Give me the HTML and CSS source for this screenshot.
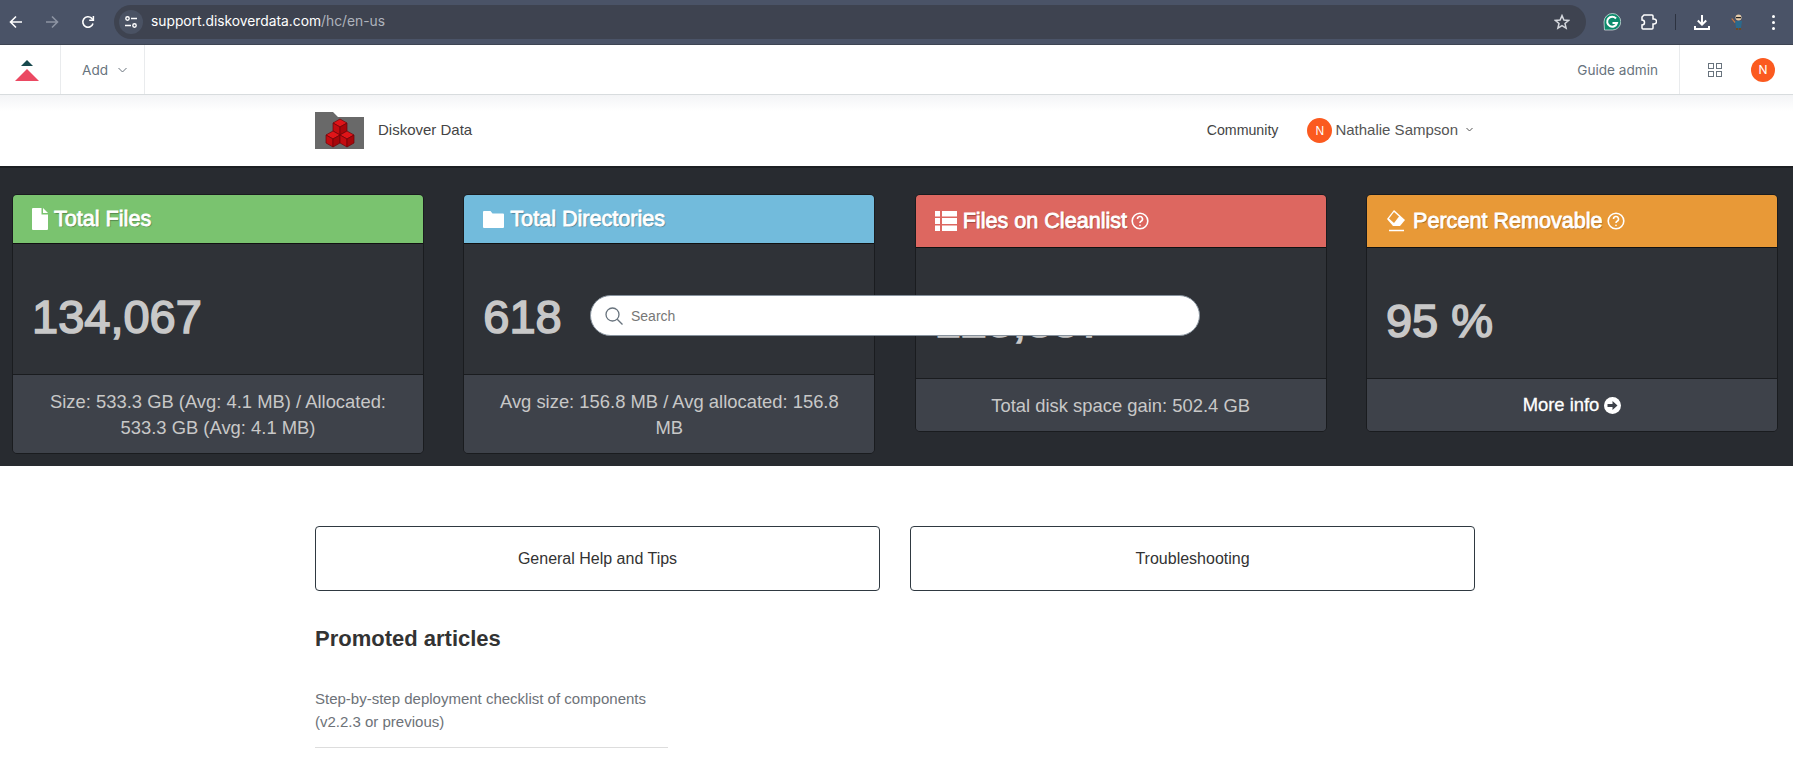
FILE: index.html
```html
<!DOCTYPE html>
<html lang="en">
<head>
  <meta charset="UTF-8" />
  <meta name="viewport" content="width=device-width, initial-scale=1.0"/>
  <title>Diskover Data</title>
  <link rel="stylesheet" href="styles.css">
</head>
<body>
  <!-- Browser toolbar -->
  <div class="browser-bar">
    <span class="nav-btn">
      <svg width="14" height="14" viewBox="0 0 14 14" fill="none" stroke="#fff" stroke-width="1.6"><path d="M13 7H2M7 1.5 1.5 7 7 12.5"/></svg>
    </span>
    <span class="nav-btn">
      <svg width="14" height="14" viewBox="0 0 14 14" fill="none" stroke="#8d94a3" stroke-width="1.6"><path d="M1 7h11M7 1.5 12.5 7 7 12.5"/></svg>
    </span>
    <span class="nav-btn">
      <svg width="14" height="14" viewBox="0 0 14 14" fill="none" stroke="#fff" stroke-width="1.6"><path d="M12 8.500A5.200 5.200 0 1 1 10.600 3.200L12 4.800"/><path d="M12.400 1v4.200H8.200" stroke-width="1.500"/></svg>
    </span>
    <div class="url-pill">
      <span class="site-info">
        <svg width="14" height="14" viewBox="0 0 14 14" fill="none" stroke="#fff" stroke-width="1.4"><circle cx="3.500" cy="3.500" r="1.700"/><path d="M7 3.500h6M1 10.500h6"/><circle cx="10.500" cy="10.500" r="1.700"/></svg>
      </span>
      <span class="url"><span class="url-host">support.diskoverdata.com</span>/hc/en-us</span>
      <svg class="star" width="16" height="16" viewBox="0 0 16 16" fill="none" stroke="#d5d8de" stroke-width="1.500"><path d="M8 1.600 9.900 6l4.700.4-3.600 3.100 1.100 4.600L8 11.700l-4.100 2.400L5 9.500 1.400 6.400 6.100 6z"/></svg>
    </div>
    <svg class="tool-grammarly" width="18" height="18" viewBox="0 0 18 18"><path d="M9.500 .5a8.200 8.200 0 0 1 0 16.500H1.500L1 9a8.500 8.500 0 0 1 8.500-8.500z" fill="#0d8a6c" stroke="#fff" stroke-width=".6"/><path d="M13 5.500A5 5 0 1 0 14 10H9.500" fill="none" stroke="#fff" stroke-width="2"/></svg>
    <svg class="tool-ext" width="16" height="16" viewBox="0 0 16 16" fill="none" stroke="#fff" stroke-width="1.500"><path d="M3 1h8a1 1 0 0 1 1 1v3h1a2.500 2.500 0 0 1 0 5h-1v4a1 1 0 0 1-1 1H2a1 1 0 0 1-1-1v-3a2.500 2.500 0 0 0 0-5V3z"/></svg>
    <span class="tool-sep"></span>
    <svg class="tool-down" width="16" height="16" viewBox="0 0 16 16" fill="none" stroke="#fff" stroke-width="2"><path d="M8 1v9M3.800 6.500 8 10.700l4.200-4.200M1 12v3h14v-3"/></svg>
    <svg class="tool-me" width="14" height="16" viewBox="0 0 14 16"><circle cx="7.500" cy="3.500" r="3" fill="#e3c9a8"/><rect x="5" y="3" width="5" height="1.200" fill="#222"/><path d="M4 7h7l-1 7H5z" fill="#2b6a8d"/><path d="M1 4l3.500 4-.8 1L.4 5z" fill="#c9773f"/><path d="M5 14h2v2H5zM8 14h2v2H8z" fill="#6d4a22"/></svg>
    <span class="tool-dots"><i></i><i></i><i></i></span>
  </div>

  <!-- Zendesk admin strip -->
  <div class="admin-bar">
    <div class="admin-logo">
      <svg width="26" height="22" viewBox="0 0 26 22"><path d="M7 7 13 1l6 6z" fill="#17494d"/><path d="M1 22 13 10l12 12z" fill="#eb4962"/></svg>
    </div>
    <div class="admin-add">
      Add
      <svg width="9" height="6" viewBox="0 0 9 6" fill="none" stroke="#68737d"><path d="M.5 1 4.500 5l4-4"/></svg>
    </div>
    <div class="admin-right">
      <span class="guide-link">Guide admin</span>
      <div class="admin-apps">
        <svg width="14" height="14" viewBox="0 0 14 14" fill="none" stroke="#68737d"><rect x=".5" y=".5" width="5" height="5"/><rect x="8.500" y=".5" width="5" height="5"/><rect x=".5" y="8.500" width="5" height="5"/><rect x="8.500" y="8.500" width="5" height="5"/></svg>
        <span class="avatar avatar-sm">N</span>
      </div>
    </div>
  </div>

  <!-- Help center header -->
  <header class="hc-header">
    <div class="wrap hc-header-row">
      <svg class="hc-logo" width="49" height="37" viewBox="0 0 49 37">
        <path d="M0 0h18l5 5h26v32H0z" fill="#696969"/>
        <g stroke="#6e0408" stroke-width=".7" stroke-linejoin="round">
          <path d="M25 7l7 4-7 4-7-4z" fill="#e01418"/><path d="M18 11l7 4v8l-7-4z" fill="#c40c10"/><path d="M32 11l-7 4v8l7-4z" fill="#a8060a"/>
          <path d="M18 19l7 4-7 4-7-4z" fill="#e01418"/><path d="M11 23l7 4v8l-7-4z" fill="#c40c10"/><path d="M25 23l-7 4v8l7-4z" fill="#a8060a"/>
          <path d="M32 19l7 4-7 4-7-4z" fill="#e01418"/><path d="M25 23l7 4v8l-7-4z" fill="#c40c10"/><path d="M39 23l-7 4v8l7-4z" fill="#a8060a"/>
        </g>
      </svg>
      <span class="hc-name">Diskover Data</span>
      <nav class="hc-nav">
        <span class="hc-community">Community</span>
        <span class="avatar avatar-md">N</span>
        <span class="hc-user">Nathalie Sampson</span>
        <svg width="7" height="5" viewBox="0 0 7 5" fill="none" stroke="#555"><path d="M.5 1 3.500 4l3-3"/></svg>
      </nav>
    </div>
  </header>

  <!-- Stats band -->
  <section class="stats-band">
    <div class="stat-card">
      <h3 class="stat-head head-green">
        <svg width="16" height="22" viewBox="0 0 16 22" fill="#fff"><path d="M1 0h8.500v6.500H16V21a1 1 0 0 1-1 1H1a1 1 0 0 1-1-1V1a1 1 0 0 1 1-1z"/><path d="M11 0l5 5h-5z"/></svg>
        Total Files
      </h3>
      <div class="stat-num">134,067</div>
      <div class="stat-foot">Size: 533.3 GB (Avg: 4.1 MB) / Allocated: 533.3 GB (Avg: 4.1 MB)</div>
    </div>

    <div class="stat-card">
      <h3 class="stat-head head-blue">
        <svg width="21" height="17" viewBox="0 0 21 17" fill="#fff"><path d="M1 0h6.500l2 2.500H20a1 1 0 0 1 1 1V16a1 1 0 0 1-1 1H1a1 1 0 0 1-1-1V1a1 1 0 0 1 1-1z"/></svg>
        Total Directories
      </h3>
      <div class="stat-num">618</div>
      <div class="stat-foot">Avg size: 156.8 MB / Avg allocated: 156.8 MB</div>
    </div>

    <div class="stat-card">
      <h3 class="stat-head stat-head-tall head-red">
        <svg width="22" height="20" viewBox="0 0 22 20" fill="#fff"><path d="M0 0h5v5.500H0zM7 0h15v5.500H7zM0 7h5v6H0zM7 7h15v6H7zM0 14.500h5V20H0zM7 14.500h15V20H7z"/></svg>
        Files on Cleanlist
        <svg class="help" width="18" height="18" viewBox="0 0 18 18" fill="none" stroke="#fff" stroke-width="1.600"><circle cx="9" cy="9" r="7.800"/><path d="M6.500 7a2.500 2.500 0 1 1 3.600 2.200c-.8.400-1.100.8-1.100 1.800"/><circle cx="9" cy="13.300" r=".5" stroke-width="1"/></svg>
      </h3>
      <div class="stat-num">128,337</div>
      <div class="stat-foot">Total disk space gain: 502.4 GB</div>
    </div>

    <div class="stat-card">
      <h3 class="stat-head stat-head-tall head-orange">
        <svg width="21" height="22" viewBox="0 0 21 22"><path d="M8 0l11 10-5 6H7L1 9z" fill="#fff"/><path d="M8 2 3 8.500l5 4.500 5-6.500z" fill="#e89937"/><path d="M3 20.500h15" stroke="#fff" stroke-width="1.500"/></svg>
        Percent Removable
        <svg class="help" width="18" height="18" viewBox="0 0 18 18" fill="none" stroke="#fff" stroke-width="1.600"><circle cx="9" cy="9" r="7.800"/><path d="M6.500 7a2.500 2.500 0 1 1 3.600 2.200c-.8.400-1.100.8-1.100 1.800"/><circle cx="9" cy="13.300" r=".5" stroke-width="1"/></svg>
      </h3>
      <div class="stat-num">95 %</div>
      <div class="stat-foot stat-foot-link">
        More info
        <svg width="17" height="17" viewBox="0 0 17 17"><circle cx="8.500" cy="8.500" r="8.500" fill="#fff"/><path d="M3.500 7h5V4l5 4.500-5 4.500v-3h-5z" fill="#3e424a"/></svg>
      </div>
    </div>

    <div class="search-pill">
      <svg width="18" height="18" viewBox="0 0 18 18" fill="none" stroke="#68737d" stroke-width="1.300"><circle cx="7.500" cy="7.500" r="6.500"/><path d="M12.200 12.200 17.500 17.500"/></svg>
      <span>Search</span>
    </div>
  </section>

  <main class="wrap">
    <div class="blocks">
      <a class="block-link">General Help and Tips</a>
      <a class="block-link">Troubleshooting</a>
    </div>
    <h2 class="promoted-title">Promoted articles</h2>
    <ul class="promoted-list">
      <li>Step-by-step deployment checklist of components (v2.2.3 or previous)</li>
    </ul>
  </main>
</body>
</html>
```

FILE: styles.css
```css
body {
  margin: 0;
  height: 768px;
  overflow: hidden;
  background-color: white;
  font-family: "Liberation Sans", Arial, sans-serif;
}
.wrap {
  width: 1160px;
  margin-left: 315px;
}

/* browser toolbar */
.browser-bar {
  display: flex;
  align-items: center;
  height: 44px;
  background-color: #4a5367;
  border-bottom: 1px solid #3d4452;
}
.nav-btn {
  display: flex;
  justify-content: center;
  width: 32px;
  margin-right: 4px;
}
.url-pill {
  display: flex;
  align-items: center;
  width: 1472px;
  height: 34px;
  margin-left: 6px;
  padding-left: 5px;
  box-sizing: border-box;
  border-radius: 17px;
  background-color: #3e4350;
}
.site-info {
  display: flex;
  align-items: center;
  justify-content: center;
  width: 24px;
  height: 24px;
  border-radius: 50%;
  background-color: #4a5263;
}
.url {
  margin-left: 8px;
  padding-bottom: 2px;
  font-family: Inter, sans-serif;
  font-size: 13.8px;
  color: #aeb3bc;
}
.url-host {
  color: white;
}
.star {
  margin-left: auto;
  margin-right: 16px;
}
.tool-grammarly {
  margin-left: 17px;
}
.tool-ext {
  margin-left: 20px;
}
.tool-sep {
  width: 1px;
  height: 16px;
  margin-left: 18px;
  background-color: #2c3240;
}
.tool-down {
  margin-left: 18px;
}
.tool-me {
  margin-left: 21px;
}
.tool-dots {
  display: flex;
  flex-direction: column;
  gap: 3px;
  margin-left: 27px;
}
.tool-dots i {
  width: 3px;
  height: 3px;
  border-radius: 50%;
  background-color: white;
}

/* admin strip */
.admin-bar {
  display: flex;
  height: 49px;
  border-bottom: 1px solid #d8dcde;
  font-family: Inter, sans-serif;
  font-size: 13.6px;
  color: #68737d;
}
.admin-logo {
  display: flex;
  align-items: center;
  width: 61px;
  padding-left: 14px;
  box-sizing: border-box;
  border-right: 1px solid #e9ebed;
}
.admin-add {
  display: flex;
  align-items: center;
  gap: 10px;
  width: 62px;
  padding-left: 21px;
  border-right: 1px solid #e9ebed;
}
.admin-right {
  display: flex;
  align-items: center;
  margin-left: auto;
}
.guide-link {
  margin-right: 21px;
}
.admin-apps {
  display: flex;
  align-items: center;
  gap: 29px;
  height: 49px;
  padding: 0 18px 0 28px;
  border-left: 1px solid #e9ebed;
}
.avatar {
  display: flex;
  align-items: center;
  justify-content: center;
  border-radius: 50%;
  background-color: #fb5a1f;
  color: white;
}
.avatar-sm {
  width: 24px;
  height: 24px;
  font-size: 12px;
}
.avatar-md {
  width: 25px;
  height: 25px;
  margin-top: 2px;
  margin-right: 3px;
  font-size: 12px;
}

/* help center header */
.hc-header {
  height: 71px;
  background: linear-gradient(#f3f4f6, white 16px);
}
.hc-header-row {
  display: flex;
  align-items: center;
  height: 69px;
}
.hc-logo {
  margin-top: 2px;
}
.hc-name {
  margin-left: 14px;
  font-size: 15px;
  color: #444;
}
.hc-nav {
  display: flex;
  align-items: center;
  margin-left: auto;
  margin-right: 2px;
  font-size: 15px;
  color: #555;
}
.hc-community {
  margin-right: 29px;
  font-size: 14.2px;
  color: #444;
}
.hc-user {
  margin-right: 8px;
}

/* stats band */
.stats-band {
  position: relative;
  display: grid;
  grid-template-columns: repeat(4, 412px);
  justify-content: space-between;
  align-items: start;
  height: 272px;
  padding: 26px 15px 0 12px;
  border-top: 2px solid #1d1f23;
  background-color: #282b30;
}
.stat-card {
  border: 1px solid #1a1c1f;
  border-radius: 5px;
  overflow: hidden;
  background-color: #2f3237;
}
.stat-head {
  display: flex;
  align-items: center;
  gap: 6px;
  height: 48px;
  margin: 0;
  padding: 0 19px;
  border-bottom: 1px solid #111;
  font-size: 21.6px;
  font-weight: normal;
  color: white;
  -webkit-text-stroke: 0.8px white;
  text-shadow: 1px 1px 1px rgba(0,0,0,0.35);
}
.stat-head-tall {
  height: 52px;
}
.head-green {
  background-color: #7ac36f;
}
.head-blue {
  background-color: #72bbdc;
}
.head-red {
  background-color: #dd6760;
}
.head-orange {
  background-color: #e89937;
}
.help {
  margin-left: -2px;
}
.stat-num {
  height: 83px;
  padding: 47px 19px 0;
  font-size: 47px;
  line-height: 52px;
  color: #c8c8c8;
  -webkit-text-stroke: 1.6px #c8c8c8;
}
.stat-foot {
  padding: 14px 22px 12px;
  border-top: 1px solid #1a1c1f;
  background-color: #3e424a;
  font-size: 18.4px;
  line-height: 26px;
  text-align: center;
  color: #c8c8c8;
}
.stat-foot-link {
  display: flex;
  align-items: center;
  justify-content: center;
  gap: 5px;
  padding: 13px 22px;
  color: white;
  -webkit-text-stroke: 0.3px white;
}

/* search sits on top of the cards */
.search-pill {
  position: absolute;
  left: 590px;
  top: 127px;
  display: flex;
  align-items: center;
  gap: 8px;
  width: 610px;
  height: 41px;
  padding-left: 14px;
  box-sizing: border-box;
  border: 1px solid #87929d;
  border-radius: 21px;
  background-color: white;
  font-size: 14px;
  color: #777;
}

/* content */
.blocks {
  display: flex;
  gap: 30px;
  padding-top: 60px;
}
.block-link {
  display: flex;
  align-items: center;
  justify-content: center;
  width: 565px;
  height: 65px;
  box-sizing: border-box;
  border: 1px solid #2f3941;
  border-radius: 4px;
  font-size: 16px;
  color: #333;
}
.promoted-title {
  margin: 33px 0 34px;
  font-size: 22px;
  line-height: 29px;
  color: #333;
}
.promoted-list {
  width: 353px;
  margin: 0;
  padding: 0;
  list-style: none;
}
.promoted-list li {
  padding-bottom: 14px;
  border-bottom: 1px solid #ddd;
  font-size: 15px;
  line-height: 23px;
  color: #6d7278;
}
```
